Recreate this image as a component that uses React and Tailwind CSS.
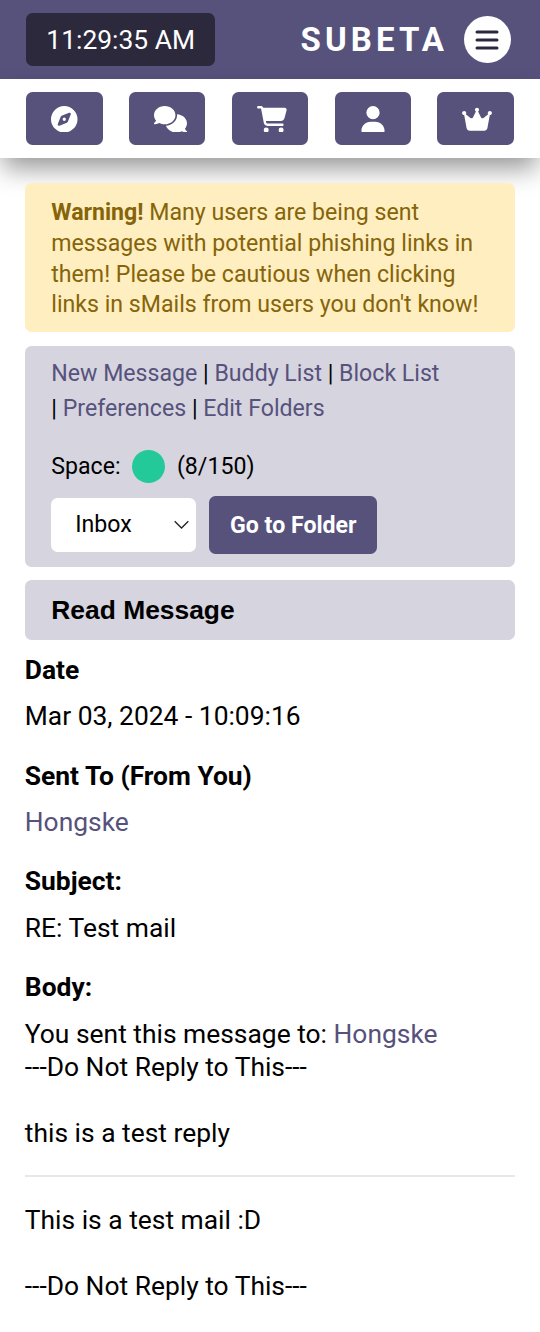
import { FaCompass, FaComments, FaCartShopping, FaUser, FaCrown } from "react-icons/fa6";

const link = "text-[#56527c]";

const tabs = [
  { name: "Explore", Icon: FaCompass, size: "h-[26.5px] w-[26.5px]" },
  { name: "Forums", Icon: FaComments, size: "h-[26.5px] w-[33px] ml-1.5" },
  { name: "Shops", Icon: FaCartShopping, size: "h-[26.5px] w-[30px] ml-1" },
  { name: "Profile", Icon: FaUser, size: "h-[26.5px] w-[24px]" },
  { name: "Account", Icon: FaCrown, size: "h-[26.5px] w-[30px] ml-1" },
];

function Header() {
  return (
    <header className="flex h-[79.3px] items-center bg-[#56527c] pl-[26.4px] pr-[29.5px] text-white">
      <div className="flex h-[52.8px] w-[188.5px] items-center justify-center rounded-[6.5px] bg-[#2c293d] pt-px text-[26.4px]">
        11:29:35 AM
      </div>
      <div className="ml-auto text-[33px] font-bold tracking-[4.1px] whitespace-nowrap">SUBETA</div>
      <button aria-label="Menu" className="ml-4 flex h-[46.5px] w-[46.5px] items-center justify-center rounded-full bg-white">
        <svg width="24" height="22" viewBox="0 0 24 22" fill="none" stroke="#2c293d" strokeWidth="3" strokeLinecap="round">
          <path d="M2 3H22M2 11H22M2 19H22" />
        </svg>
      </button>
    </header>
  );
}

function Nav() {
  return (
    <nav className="flex h-[79px] items-center justify-between bg-white px-[26.4px] shadow-[0_13px_26px_-3px_rgba(0,0,0,0.42)]">
      {tabs.map(({ name, Icon, size }) => (
        <button key={name} aria-label={name} className="flex h-[53px] w-[76.4px] items-center justify-center rounded-[6.5px] bg-[#56527c] text-white">
          <Icon className={size} />
        </button>
      ))}
    </nav>
  );
}

function Field({ label, children }) {
  return (
    <div className="mb-[26.4px]">
      <div className="mb-[13.2px] font-bold">{label}</div>
      <div>{children}</div>
    </div>
  );
}

export default function App() {
  return (
    <div className="min-h-[1332px] w-full overflow-hidden bg-white font-[Roboto,sans-serif] text-[26.4px] leading-[33px] text-black">
      <Header />
      <Nav />
      <main className="px-[24.8px] pt-[25px]">
        <div className="h-[149px] rounded-[6.5px] bg-[#ffeec0] px-[26.5px] pt-[14.9px] text-[23.13px] leading-[30.7px] whitespace-nowrap text-[#85640a]">
          <div><strong>Warning!</strong> Many users are being sent</div>
          <div>messages with potential phishing links in</div>
          <div>them! Please be cautious when clicking</div>
          <div>links in sMails from users you don't know!</div>
        </div>

        <section className="mt-[14px] h-[220.5px] rounded-[6.5px] bg-[#d6d4df] px-[26.5px] pt-[10px] text-[23.13px]">
          <div className="h-[70px] leading-[35px] whitespace-nowrap">
            <div><a className={link}>New Message</a> | <a className={link}>Buddy List</a> | <a className={link}>Block List</a></div>
            <div>| <a className={link}>Preferences</a> | <a className={link}>Edit Folders</a></div>
          </div>
          <div className="mt-[23.6px] flex h-[33px] items-center">
            <span>Space:</span>
            <span className="mr-[12px] ml-[11.4px] h-[33px] w-[33px] rounded-full bg-[#24c999]" />
            <span>(8/150)</span>
          </div>
          <div className="mt-[13px] flex items-center gap-[13px]">
            <div className="flex h-[54.5px] w-[145px] items-center justify-between rounded-[6.5px] bg-white pl-6 pr-[7px]">
              <span>Inbox</span>
              <svg width="15" height="10" viewBox="0 0 15 10" fill="none" stroke="#222" strokeWidth="1.3">
                <path d="M.7 1.2L7.5 8L14.3 1.2" />
              </svg>
            </div>
            <button className="h-[58px] w-[168px] rounded-[6.5px] bg-[#56527c] pt-0.5 font-bold whitespace-nowrap text-white">Go to Folder</button>
          </div>
        </section>

        <h1 className="mt-[13.5px] flex h-[59.5px] items-center rounded-[6.5px] bg-[#d6d4df] px-[26.5px] font-['Liberation_Sans',sans-serif] text-[26.4px] font-bold">
          Read Message
        </h1>

        <div className="pt-[14.4px]">
          <Field label="Date">Mar 03, 2024 - 10:09:16</Field>
          <Field label="Sent To (From You)"><a className={link}>Hongske</a></Field>
          <Field label="Subject:">RE: Test mail</Field>
          <div className="mb-[14.2px] font-bold">Body:</div>
          <div className="whitespace-nowrap">
            <div>You sent this message to: <a className={link}>Hongske</a></div>
            <div>---Do Not Reply to This---</div>
            <div className="mt-[33px]">this is a test reply</div>
            <hr className="mt-[24.6px] mb-[27.2px] border-t-2 border-[#e8e8e8]" />
            <div>This is a test mail :D</div>
            <div className="mt-[33px]">---Do Not Reply to This---</div>
          </div>
        </div>
      </main>
    </div>
  );
}
